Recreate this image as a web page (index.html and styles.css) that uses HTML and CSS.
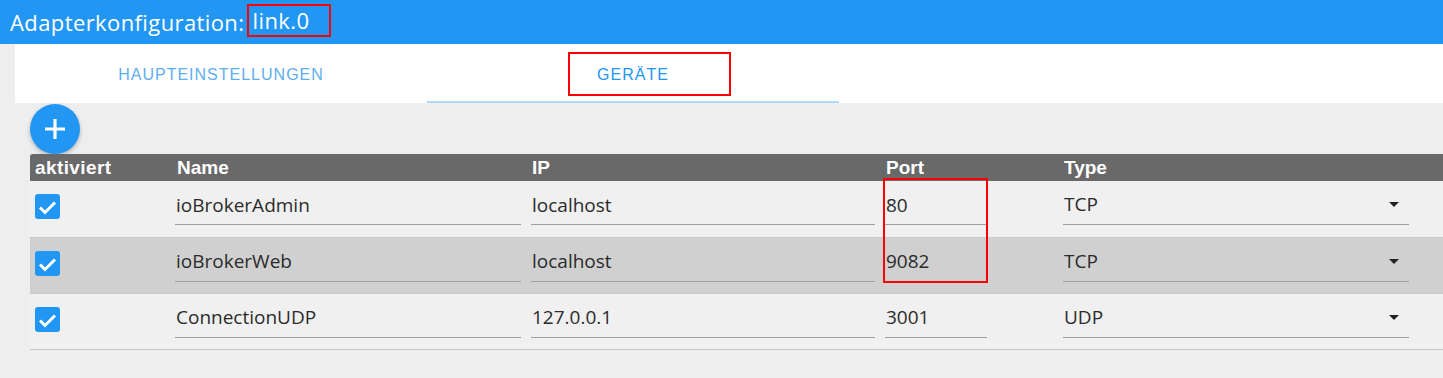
FILE: index.html
```html
<!DOCTYPE html>
<html lang="de">
<head>
    <meta charset="UTF-8">
    <title>Adapterkonfiguration: link.0</title>
    <link rel="stylesheet" href="styles.css">
</head>
<body>
    <header class="appbar">
        Adapterkonfiguration: <span class="mark">link.0</span>
    </header>

    <div class="content">
        <nav class="tabs">
            <div class="tab">HAUPTEINSTELLUNGEN</div>
            <div class="tab active">GERÄTE<span class="tab-mark"></span></div>
        </nav>

        <section class="devices">
            <button class="fab" title="Hinzufügen">
                <svg width="22" height="22" viewBox="0 0 22 22">
                    <path d="M11 1v20M1 11h20" stroke="#fff" stroke-width="3.2" fill="none"/>
                </svg>
            </button>

            <div class="grid-wrap">
                <table class="grid">
                    <colgroup>
                        <col style="width: 141px">
                        <col style="width: 356px">
                        <col style="width: 354px">
                        <col style="width: 178px">
                        <col style="width: 356px">
                        <col>
                    </colgroup>
                    <thead>
                        <tr>
                            <th>aktiviert</th>
                            <th>Name</th>
                            <th>IP</th>
                            <th>Port</th>
                            <th>Type</th>
                            <th></th>
                        </tr>
                    </thead>
                    <tbody id="rows"></tbody>
                </table>
                <div class="port-mark"></div>
            </div>
        </section>
    </div>

    <script>
        const devices = [
            { enabled: true, name: 'ioBrokerAdmin', ip: 'localhost', port: '80', type: 'TCP' },
            { enabled: true, name: 'ioBrokerWeb', ip: 'localhost', port: '9082', type: 'TCP' },
            { enabled: true, name: 'ConnectionUDP', ip: '127.0.0.1', port: '3001', type: 'UDP' }
        ];

        const check = '<svg width="25" height="25" viewBox="0 0 25 25"><path d="M5 13.5l5 5 10-10" stroke="#fff" stroke-width="3" fill="none"/></svg>';

        function renderRows() {
            const body = document.getElementById('rows');
            devices.forEach((d, i) => {
                const tr = document.createElement('tr');
                if (i % 2 === 1) tr.classList.add('odd');
                tr.innerHTML =
                    '<td><span class="check">' + (d.enabled ? check : '') + '</span></td>' +
                    '<td><input class="field" value="' + d.name + '"></td>' +
                    '<td><input class="field" value="' + d.ip + '"></td>' +
                    '<td><input class="field port" value="' + d.port + '"></td>' +
                    '<td><div class="field select">' + d.type + '<span class="arrow"></span></div></td>' +
                    '<td></td>';
                body.appendChild(tr);
            });
        }

        renderRows();
    </script>
</body>
</html>
```

FILE: styles.css
```css
* {
    margin: 0;
    padding: 0;
    box-sizing: border-box;
}

body {
    background: #eeeeee;
    font-family: "Open Sans", sans-serif;
    color: #222;
    overflow: hidden;
}

.appbar {
    height: 44px;
    background: #2196f3;
    color: white;
    font-size: 22px;
    letter-spacing: 0.4px;
    line-height: 44px;
    padding-left: 10px;
    white-space: nowrap;
}

.mark {
    display: inline-block;
    border: 2px solid #f00;
    line-height: 29px;
    padding: 0 20px 0 4px;
    margin-left: -4px;
    vertical-align: top;
    margin-top: 4px;
}

.content {
    padding-left: 15px;
}

.tabs {
    display: flex;
    height: 59px;
    background: white;
}

.tab {
    width: 412px;
    position: relative;
    text-align: center;
    font-family: "Liberation Sans", Arial, sans-serif;
    font-size: 16px;
    letter-spacing: 1px;
    line-height: 59px;
    padding-top: 1px;
    color: #5eaeee;
}

.tab.active {
    color: #2196f3;
    border-bottom: 2px solid #afd9f8;
}

.tab-mark {
    position: absolute;
    left: 141px;
    top: 8px;
    width: 163px;
    height: 44px;
    border: 2px solid #f00;
}

.devices {
    padding: 1px 0 0 15px;
}

.fab {
    width: 50px;
    height: 50px;
    border: none;
    border-radius: 50%;
    background: #2196f3;
    display: flex;
    align-items: center;
    justify-content: center;
    box-shadow: 0 2px 4px rgba(0, 0, 0, 0.25);
    cursor: pointer;
}

.grid-wrap {
    position: relative;
}

.grid {
    width: 1413px;
    border-collapse: collapse;
    table-layout: fixed;
}

.grid th {
    background: #696969;
    color: white;
    font-family: "Liberation Sans", Arial, sans-serif;
    font-size: 19px;
    font-weight: bold;
    text-align: left;
    height: 27px;
    line-height: 27px;
    padding: 0 0 0 5px;
}

.grid th:first-child {
    border-top-left-radius: 3px;
    letter-spacing: 0.4px;
}

.grid th:nth-child(2) {
    padding-left: 6px;
}

.grid td {
    height: 56px;
    vertical-align: top;
    padding: 12px 6px 0 4px;
    background: #f0f0f0;
}

.grid td:first-child {
    padding: 13px 0 0 5px;
}

.grid tr.odd td {
    background: #d0d0d0;
}

.grid tbody tr {
    border-bottom: 1px solid #c9c9c9;
}

.check {
    display: block;
    width: 25px;
    height: 25px;
    border-radius: 3px;
    background: #2196f3;
}

.field {
    display: block;
    width: 100%;
    height: 32px;
    padding: 0 0 8px 1px;
    border: none;
    border-bottom: 1px solid #a0a0a0;
    background: transparent;
    font-family: "Open Sans", sans-serif;
    font-size: 19px;
    color: #2b2b2b;
    outline: none;
}

.field.port {
    width: 102px;
}

.select {
    position: relative;
    line-height: 23px;
    padding-left: 1px;
}

.arrow {
    position: absolute;
    right: 10px;
    top: 9px;
    border-left: 5px solid transparent;
    border-right: 5px solid transparent;
    border-top: 5px solid #222;
}

.port-mark {
    position: absolute;
    left: 853px;
    top: 24px;
    width: 105px;
    height: 105px;
    border: 2px solid #f00;
}
```
